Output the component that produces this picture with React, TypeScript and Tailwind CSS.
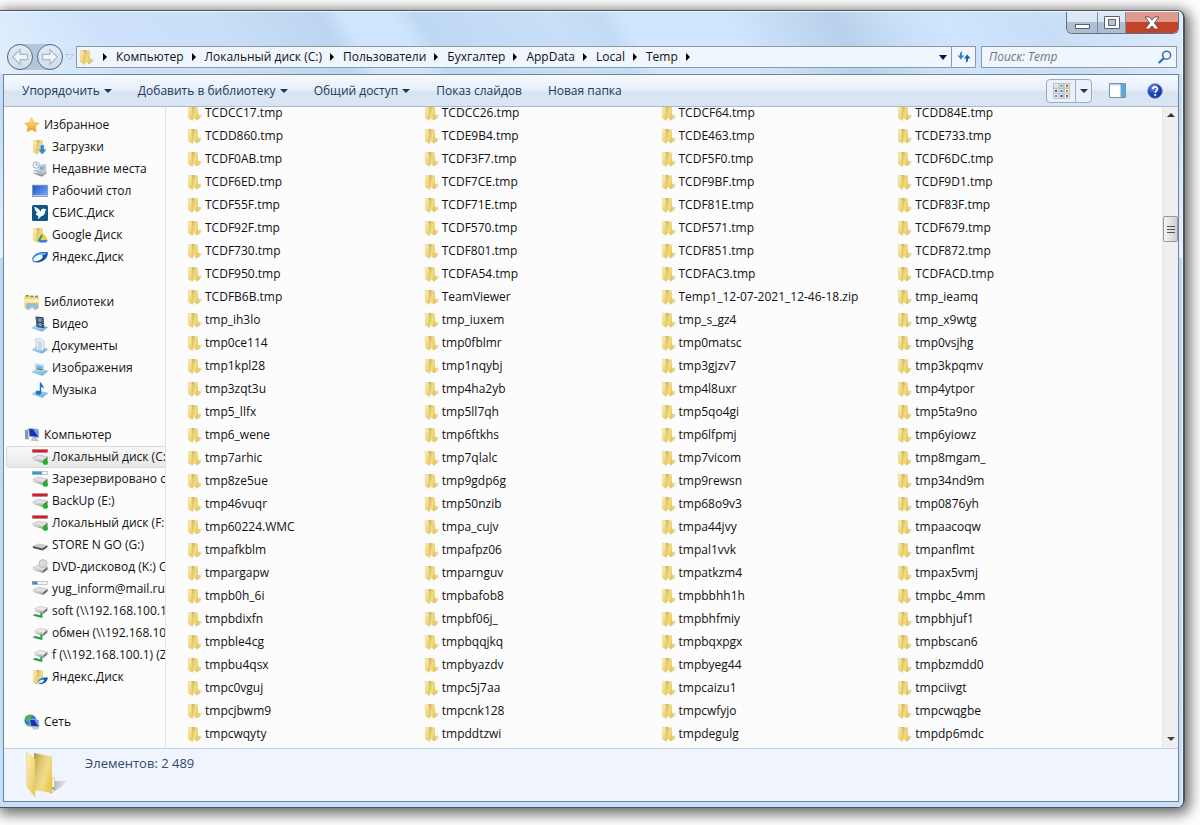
import React from "react";

interface NavItem {
  label: string;
  icon: React.ReactNode;
  active?: boolean;
}

interface NavGroup extends NavItem {
  items: NavItem[];
}

const files = `
TCDCC17.tmp TCDCC26.tmp TCDCF64.tmp TCDD84E.tmp
TCDD860.tmp TCDE9B4.tmp TCDE463.tmp TCDE733.tmp
TCDF0AB.tmp TCDF3F7.tmp TCDF5F0.tmp TCDF6DC.tmp
TCDF6ED.tmp TCDF7CE.tmp TCDF9BF.tmp TCDF9D1.tmp
TCDF55F.tmp TCDF71E.tmp TCDF81E.tmp TCDF83F.tmp
TCDF92F.tmp TCDF570.tmp TCDF571.tmp TCDF679.tmp
TCDF730.tmp TCDF801.tmp TCDF851.tmp TCDF872.tmp
TCDF950.tmp TCDFA54.tmp TCDFAC3.tmp TCDFACD.tmp
TCDFB6B.tmp TeamViewer Temp1_12-07-2021_12-46-18.zip tmp_ieamq
tmp_ih3lo tmp_iuxem tmp_s_gz4 tmp_x9wtg
tmp0ce114 tmp0fblmr tmp0matsc tmp0vsjhg
tmp1kpl28 tmp1nqybj tmp3gjzv7 tmp3kpqmv
tmp3zqt3u tmp4ha2yb tmp4l8uxr tmp4ytpor
tmp5_llfx tmp5ll7qh tmp5qo4gi tmp5ta9no
tmp6_wene tmp6ftkhs tmp6lfpmj tmp6yiowz
tmp7arhic tmp7qlalc tmp7vicom tmp8mgam_
tmp8ze5ue tmp9gdp6g tmp9rewsn tmp34nd9m
tmp46vuqr tmp50nzib tmp68o9v3 tmp0876yh
tmp60224.WMC tmpa_cujv tmpa44jvy tmpaacoqw
tmpafkblm tmpafpz06 tmpal1vvk tmpanflmt
tmpargapw tmparnguv tmpatkzm4 tmpax5vmj
tmpb0h_6i tmpbafob8 tmpbbhh1h tmpbc_4mm
tmpbdixfn tmpbf06j_ tmpbhfmiy tmpbhjuf1
tmpble4cg tmpbqqjkq tmpbqxpgx tmpbscan6
tmpbu4qsx tmpbyazdv tmpbyeg44 tmpbzmdd0
tmpc0vguj tmpc5j7aa tmpcaizu1 tmpciivgt
tmpcjbwm9 tmpcnk128 tmpcwfyjo tmpcwqgbe
tmpcwqyty tmpddtzwi tmpdegulg tmpdp6mdc
`
  .trim()
  .split(/\s+/);

const crumbs = [
  "Компьютер",
  "Локальный диск (C:)",
  "Пользователи",
  "Бухгалтер",
  "AppData",
  "Local",
  "Temp",
];

const SharedGradients = () => (
  <svg width="0" height="0" className="absolute" aria-hidden="true">
    <defs>
      <linearGradient id="flap" x1="0" y1="0" x2="1" y2="1">
        <stop offset="0" stopColor="#fff3b4" />
        <stop offset="1" stopColor="#e6c355" />
      </linearGradient>
      <linearGradient id="back" x1="0" y1="0" x2="1" y2="0.6">
        <stop offset="0" stopColor="#b8973a" />
        <stop offset="0.4" stopColor="#e2cb76" />
        <stop offset="0.7" stopColor="#f1dd88" />
        <stop offset="1" stopColor="#ecc94b" />
      </linearGradient>
      <linearGradient id="screen" x1="0" y1="0" x2="1" y2="1">
        <stop offset="0" stopColor="#1d4fc4" />
        <stop offset="1" stopColor="#7fb0f5" />
      </linearGradient>
      <linearGradient id="star" x1="0" y1="0" x2="0" y2="1">
        <stop offset="0" stopColor="#ffe98a" />
        <stop offset="1" stopColor="#f29a1f" />
      </linearGradient>
      <linearGradient id="metal" x1="0" y1="0" x2="0" y2="1">
        <stop offset="0" stopColor="#f4f4f4" />
        <stop offset="1" stopColor="#8b8b8b" />
      </linearGradient>
      <linearGradient id="tray" x1="0" y1="0" x2="1" y2="1">
        <stop offset="0" stopColor="#cdeafa" />
        <stop offset="1" stopColor="#5aa9dc" />
      </linearGradient>
      <linearGradient id="disk" x1="0" y1="0" x2="1" y2="0.4">
        <stop offset="0" stopColor="#2f9bea" />
        <stop offset="1" stopColor="#0b3f9c" />
      </linearGradient>
      <radialGradient id="help" cx="0.4" cy="0.3" r="0.8">
        <stop offset="0" stopColor="#6f92ee" />
        <stop offset="0.5" stopColor="#1f45c0" />
        <stop offset="1" stopColor="#0d2a86" />
      </radialGradient>
      <linearGradient id="shade" x1="0" y1="0" x2="1" y2="0">
        <stop offset="0" stopColor="#777" stopOpacity="0.6" />
        <stop offset="1" stopColor="#777" stopOpacity="0.1" />
      </linearGradient>
    </defs>
  </svg>
);

const Icon = ({ children }: { children: React.ReactNode }) => (
  <svg viewBox="0 0 16 16" className="h-4 w-4 shrink-0" aria-hidden="true">
    {children}
  </svg>
);

const FolderShape = () => (
  <>
    <path d="M9 10.5 15 9.5 14.5 12.5 9 15.5Z" fill="url(#shade)" />
    <path d="M4.5 1 11 1.6V14.3L4.5 13.6Z" fill="url(#back)" />
    <path d="M11 9.8 12.8 10V14L11 14.3Z" fill="#e9d173" />
    <path d="M1.4 1 5.6 2.8V15.6L1.4 13.2Z" fill="url(#flap)" stroke="#dcc57a" strokeWidth="0.4" />
  </>
);

const FolderIcon = () => (
  <Icon>
    <FolderShape />
  </Icon>
);

const StarIcon = () => (
  <Icon>
    <path
      d="M7.6.8 9.8 5.4l5 .8-3.6 3.4 1 5.4-4.4-2.5-4.6 2.3.8-5L.8 6.3l4.8-.8Z"
      fill="url(#star)"
      stroke="#e7a23a"
      strokeWidth="0.6"
    />
  </Icon>
);

const DownloadsIcon = () => (
  <Icon>
    <FolderShape />
    <path d="M8.4 6h3.6v4.4h2.2l-4 4.8-4-4.8h2.2Z" fill="#2b86d6" stroke="#bfe0f8" strokeWidth="0.4" />
  </Icon>
);

const RecentIcon = () => (
  <Icon>
    <path d="M5 9.5 12 8l3 4-5 3.4-6-2Z" fill="url(#metal)" stroke="#888" strokeWidth="0.4" />
    <path d="M6.5 4.5 13.5 3.5V9.5L7 11Z" fill="#dfe7ee" stroke="#8f9aa5" strokeWidth="0.6" />
    <path d="M8 5.6 12.4 5V8.6L8 9.5Z" fill="#7faed6" />
    <circle cx="4.2" cy="4" r="3.2" fill="#f3f6f9" stroke="#8fa0ae" strokeWidth="0.8" />
    <path d="M4.2 2v2.1h1.6" fill="none" stroke="#4a6e92" strokeWidth="0.6" />
    <path d="m1.5 10 3.5-.8M1.2 12l3 1" stroke="#9aa3ab" strokeWidth="1" />
  </Icon>
);

const DesktopIcon = () => (
  <Icon>
    <rect x="0.5" y="2.2" width="15" height="11.2" fill="url(#screen)" stroke="#7d93ba" strokeWidth="0.8" />
    <path d="M1 12h14v1H1z" fill="#b7cdf0" />
  </Icon>
);

const SbisIcon = () => (
  <Icon>
    <rect width="16" height="16" rx="1.5" fill="#0e5785" />
    <path
      d="M2.4 1.8C5 2.4 7.4 4.2 8.4 6.4 9.2 4.6 10.4 3.6 12 3.6L14.6 5 13.2 6C13.2 9.4 11.4 11 9.2 11.2L6 14.400 6.400 11C4.400 10.600 3.800 9.200 4 8L5.800 8C3.600 6.600 2.400 4.400 2.400 1.800Z"
      fill="#fff"
    />
  </Icon>
);

const GoogleDriveIcon = () => (
  <Icon>
    <FolderShape />
    <path d="M9.3 7h2.6l3.8 6h-2.6Z" fill="#f7c52d" />
    <path d="M9.3 7 5.8 13.2 7 15.4l3.6-6.2Z" fill="#1fa463" />
    <path d="M8.3 13h7.4l-1.3 2.4H7Z" fill="#4076e8" />
  </Icon>
);

const YandexIcon = () => (
  <Icon>
    <path d="M.2 9.400C1.800 5 7 2.200 15.800 3.200 16.200 9 10.400 13.600 4.400 13.600 1.200 13.400-.2 11.600.2 9.400Z" fill="url(#disk)" />
    <path d="M3.400 7.200C6.400 4 11 3.600 14.800 3.900 13 6.800 8 6.400 3.400 7.200Z" fill="#5bb6f5" />
    <ellipse cx="6" cy="9" rx="5" ry="2.500" transform="rotate(-24 6 9)" fill="#f4faff" />
  </Icon>
);

const LibraryIcon = () => (
  <Icon>
    <path d="M1 2h4l1 1.3h8.5V14H1Z" fill="#f1d77b" stroke="#d3b454" strokeWidth="0.6" />
    <path d="M2 1h2.6v1.4H2z" fill="#4ba24b" />
    <path d="M6.5 1.6h3V3h-3z" fill="#d4653f" />
    <path d="M11 1.6h3V3h-3z" fill="#4b8bd4" />
    <path d="M.6 5h14.8v3.4H.6z" fill="#fbeeb0" />
    <path d="M3 15.2V9.8h10v5.4h-2.6v-2.8H5.6v2.8Z" fill="#8ec7ee" stroke="#5f9fcb" strokeWidth="0.5" />
  </Icon>
);

const Tray = () => (
  <path d="M.4 12 5 8.6l10.6 2.6L10.4 15.4Z" fill="url(#tray)" stroke="#5d9fca" strokeWidth="0.5" />
);

const VideoIcon = () => (
  <Icon>
    <Tray />
    <path d="M3.4.6 11.6 1.2 12.4 12.2 4.6 11Z" fill="#34404e" />
    <path d="M5.8 2.2 9.6 2.5V6L6.1 5.7ZM6.2 7 9.9 7.3 10.1 10.5 6.5 10Z" fill="#6f9fcc" />
    <path d="M4.4 1.6 5.2 10.6M10.8 2 11.5 11.3" stroke="#c7d3de" strokeWidth="0.7" strokeDasharray="1 1" />
  </Icon>
);

const DocumentsIcon = () => (
  <Icon>
    <Tray />
    <path d="M3.6 1 9.4.8 12 3.2V12.6L4.6 11.4Z" fill="#f3f8fc" stroke="#8ea9bf" strokeWidth="0.6" />
    <path d="M5.4 4h4.6M5.6 6h4.8M5.7 8h4.8M5.9 10h4.2" stroke="#87a8c6" strokeWidth="0.7" />
  </Icon>
);

const PicturesIcon = () => (
  <Icon>
    <Tray />
    <path d="M3.2 4 11.6 5V12L3.8 10.6Z" fill="#fff" stroke="#86a9c4" strokeWidth="0.6" />
    <path d="M4.4 5.2 10.6 6V8.8L4.6 8Z" fill="#69b3e6" />
    <path d="M4.6 8 10.6 8.8V10.8L4.8 9.8Z" fill="#4d8d77" />
  </Icon>
);

const MusicIcon = () => (
  <Icon>
    <Tray />
    <ellipse cx="6.6" cy="10.8" rx="2.8" ry="2" fill="#1e73c4" />
    <path d="M7.8.6H9.2C9.4 3 12.4 3.6 11.6 7 11 5.4 10 5 9.2 5V11H7.8Z" fill="#1e73c4" />
  </Icon>
);

const Monitor = () => (
  <>
    <path d="M4.6 1.4 14 2.4 14.6 10.4 5.4 9.4Z" fill="#1233b8" stroke="#a8b2c2" strokeWidth="0.9" />
    <path d="M9.4 2.4 13.4 2.8 13.9 9.6Z" fill="#7fa7f2" />
    <path d="M8.6 10.6 12 11 14.4 14 7.4 13.4Z" fill="#c4cad2" stroke="#929aa5" strokeWidth="0.4" />
  </>
);

const ComputerIcon = () => (
  <Icon>
    <path d="M.8 3 4 2.4 4.6 12.6 1.2 12Z" fill="#8c949e" />
    <path d="M1.5 4.5h1.8" stroke="#5fd15f" strokeWidth="0.9" />
    <Monitor />
  </Icon>
);

const NetworkIcon = () => (
  <Icon>
    <circle cx="6.4" cy="6.4" r="6" fill="#2f7fcf" />
    <path d="M1 4.5C3 1 6 .6 8 1.2 8 4 5 4.6 4.4 7.6 2.6 8 1.2 6.6 1 4.5ZM2.6 10.6 5.6 9.8 6.4 12.2 4.6 12Z" fill="#4fb54a" />
    <path d="M5.6 5.2 14.2 6 15 13 6.6 12.2Z" fill="#1a2fb4" stroke="#b5bfce" strokeWidth="0.8" />
    <path d="M10.6 6.2 13.8 6.6 14.2 12.2Z" fill="#7fa7f2" />
    <path d="M8 13h6l1.4 2.4H8.6Z" fill="#c4cad2" />
  </Icon>
);

const DriveShape = () => (
  <>
    <path d="M.6 9 6.4 6.2 15.6 8 11 11.4Z" fill="#e2e2e2" stroke="#8d8d8d" strokeWidth="0.4" />
    <path d="M.6 9 11 11.4V14L1 11Z" fill="url(#metal)" />
    <path d="M11 11.4 15.6 8V10.4L11 14Z" fill="#6c6c6c" />
  </>
);

const UsageDriveIcon = ({ fill, width, ok = false }: { fill: string; width: number; ok?: boolean }) => (
  <Icon>
    <DriveShape />
    <rect x="0.4" y="0.6" width="15.2" height="2.8" fill="#f2f2f2" stroke="#9a9a9a" strokeWidth="0.5" />
    <rect x="0.4" y="0.6" width={width} height="2.8" fill={fill} />
    {ok && <circle cx="13.4" cy="13.2" r="2.6" fill="#1fb32b" />}
  </Icon>
);

const UsbDriveIcon = () => (
  <Icon>
    <path d="M.8 9 6.6 6.4 15.4 8.2 10.6 11.4Z" fill="#c9c9c9" />
    <path d="M.8 9 10.6 11.4V13.6L1 11Z" fill="#4d4d4d" />
    <path d="M10.6 11.4 15.4 8.2V10L10.6 13.6Z" fill="#2c2c2c" />
  </Icon>
);

const DvdIcon = () => (
  <Icon>
    <DriveShape />
    <circle cx="11" cy="4.6" r="4" fill="#d9dfd8" stroke="#9a9f9c" strokeWidth="0.6" />
    <circle cx="11" cy="4.6" r="1.1" fill="#fff" stroke="#999" strokeWidth="0.4" />
  </Icon>
);

const NetDriveIcon = () => (
  <Icon>
    <path d="M2.6 6 7.4 3.4 15.4 5 11.4 8.2Z" fill="#ececec" stroke="#8d8d8d" strokeWidth="0.4" />
    <path d="M2.6 6 11.4 8.2V11L2.8 8.2Z" fill="url(#metal)" />
    <path d="M11.4 8.2 15.4 5V7.6L11.4 11Z" fill="#777" />
    <path d="M1 12 9 14" stroke="#9a9a9a" strokeWidth="1.4" />
    <path d="M2.6 11.8 9.4 13.6V9.8" fill="none" stroke="#19a548" strokeWidth="2" />
  </Icon>
);

const YandexFolderIcon = () => (
  <Icon>
    <FolderShape />
    <path d="M6 13C6.400 9.400 10.600 7.800 15.800 8.600 15.600 13 10.600 15.800 7.200 14.800Z" fill="url(#disk)" />
    <ellipse cx="9.400" cy="12.200" rx="3" ry="1.300" transform="rotate(-24 9.400 12.200)" fill="#dff0fd" />
  </Icon>
);

const redDrive = <UsageDriveIcon fill="#cf1f2b" width={15.2} ok />;

const navGroups: NavGroup[] = [
  {
    label: "Избранное",
    icon: <StarIcon />,
    items: [
      { label: "Загрузки", icon: <DownloadsIcon /> },
      { label: "Недавние места", icon: <RecentIcon /> },
      { label: "Рабочий стол", icon: <DesktopIcon /> },
      { label: "СБИС.Диск", icon: <SbisIcon /> },
      { label: "Google Диск", icon: <GoogleDriveIcon /> },
      { label: "Яндекс.Диск", icon: <YandexIcon /> },
    ],
  },
  {
    label: "Библиотеки",
    icon: <LibraryIcon />,
    items: [
      { label: "Видео", icon: <VideoIcon /> },
      { label: "Документы", icon: <DocumentsIcon /> },
      { label: "Изображения", icon: <PicturesIcon /> },
      { label: "Музыка", icon: <MusicIcon /> },
    ],
  },
  {
    label: "Компьютер",
    icon: <ComputerIcon />,
    items: [
      { label: "Локальный диск (C:)", icon: redDrive, active: true },
      { label: "Зарезервировано с", icon: <UsageDriveIcon fill="#2f9fce" width={9.5} ok /> },
      { label: "BackUp (E:)", icon: redDrive },
      { label: "Локальный диск (F:)", icon: redDrive },
      { label: "STORE N GO (G:)", icon: <UsbDriveIcon /> },
      { label: "DVD-дисковод (K:) C", icon: <DvdIcon /> },
      { label: "yug_inform@mail.ru", icon: <UsageDriveIcon fill="#2f8fc0" width={5} /> },
      { label: "soft (\\\\192.168.100.1)", icon: <NetDriveIcon /> },
      { label: "обмен (\\\\192.168.10", icon: <NetDriveIcon /> },
      { label: "f (\\\\192.168.100.1) (Z", icon: <NetDriveIcon /> },
      { label: "Яндекс.Диск", icon: <YandexFolderIcon /> },
    ],
  },
  { label: "Сеть", icon: <NetworkIcon />, items: [] },
];

const Caret = () => (
  <svg viewBox="0 0 8 4" className="h-1 w-2 shrink-0" aria-hidden="true">
    <path d="M0 0h8L4 4Z" fill="#1e3358" />
  </svg>
);

const Chevron = () => (
  <svg viewBox="0 0 4 8" className="mr-[9px] ml-2 h-2 w-1 shrink-0" aria-hidden="true">
    <path d="M0 0 4 4 0 8Z" fill="#000" />
  </svg>
);

const WindowButtons = () => (
  <div className="flex h-[22px] overflow-hidden rounded-b-md border border-t-0 border-[#5f7185]">
    <button
      type="button"
      aria-label="Свернуть"
      className="flex w-[31px] items-end justify-center border-r border-[#7f90a6] bg-linear-to-b from-[#dbe8f6] from-45% to-[#aebfd3] to-50% pb-1"
    >
      <span className="h-[5px] w-[15px] border border-[#5a6270] bg-white" />
    </button>
    <button
      type="button"
      aria-label="Развернуть"
      className="flex w-7 items-center justify-center border-r border-[#7f90a6] bg-linear-to-b from-[#dbe8f6] from-45% to-[#aebfd3] to-50%"
    >
      <svg viewBox="0 0 16 13" className="h-[13px] w-4" aria-hidden="true">
        <path d="M.5.5h15v12H.5Z" fill="#fff" stroke="#5a6270" />
        <path d="M4.5 3.5h7v6h-7Z" fill="#b5c6da" stroke="#5a6270" />
      </svg>
    </button>
    <button
      type="button"
      aria-label="Закрыть"
      className="flex w-[52px] items-center justify-center bg-linear-to-b from-[#df9c8e] from-45% to-[#c4412a] to-50%"
    >
      <svg viewBox="0 0 16 14" className="h-[14px] w-4" aria-hidden="true">
        <path
          d="M1 1h4.4L8 4l2.6-3H15l-4.6 6 4.6 6h-4.4L8 10l-2.6 3H1l4.6-6Z"
          fill="#fff"
          stroke="#5b4a52"
          strokeWidth="0.9"
        />
      </svg>
    </button>
  </div>
);

const NavButtons = () => (
  <div className="flex h-[26px] items-center rounded-full bg-[#b4c6dc]">
    {["M11 4 5 10l6 6v-3.800h6V7.800h-6Z", "M11 4l6 6-6 6v-3.800H5V7.800h6Z"].map((d, i) => (
      <button
        key={d}
        type="button"
        aria-label={i === 0 ? "Назад" : "Вперед"}
        className="mr-1 flex h-[26px] w-[26px] items-center justify-center rounded-full border border-[#5c6b7d] bg-linear-to-b from-[#e3ebf4] to-[#cfddec] last:mr-0"
      >
        <svg viewBox="2 1 18 18" className="h-[22px] w-[22px] shrink-0" aria-hidden="true">
          <path d={d} fill="#f1f5f9" stroke="#aab8c8" strokeWidth="1" />
        </svg>
      </button>
    ))}
  </div>
);

const AddressBar = () => (
  <div className="flex items-center pr-[5px] pl-[7px]">
    <NavButtons />
    <svg viewBox="0 0 9 6" className="mx-0.5 h-1.5 w-[9px] shrink-0" aria-hidden="true">
      <path d="M.7.7h7.6L4.5 5.3Z" fill="#e8f1fb" stroke="#a9bad0" strokeWidth="0.8" />
    </svg>
    <nav
      aria-label="Адрес"
      className="flex h-[22px] min-w-0 flex-1 items-center border border-[#8d98a6] bg-[#eff6fe] pl-0.5"
    >
      <FolderIcon />
      <div className="flex min-w-0 flex-1 items-center">
        <Chevron />
        {crumbs.map((crumb) => (
          <React.Fragment key={crumb}>
            <a href="#" className="whitespace-nowrap">
              {crumb}
            </a>
            <Chevron />
          </React.Fragment>
        ))}
      </div>
      <button type="button" aria-label="Предыдущие расположения" className="flex h-full w-4 items-center justify-center">
        <svg viewBox="0 0 8 5" className="h-[5px] w-2" aria-hidden="true">
          <path d="M0 0h8L4 5Z" fill="#10104c" />
        </svg>
      </button>
      <button
        type="button"
        aria-label="Обновить"
        className="flex h-full w-6 items-center justify-center border-l border-[#8d98a6]"
      >
        <svg viewBox="0 0 14 12" className="h-3 w-3.5" aria-hidden="true">
          <path d="M5.4.6C3 .8 2.8 3 3 4.6H.6L4 8.6l3.2-4H5C4.8 3 4.8 1.6 5.4.6Z" fill="#2f86c9" />
          <path d="M8.6 11.4c2.4-.2 2.6-2.4 2.4-4h2.6L10.2 3.4 7 7.4h2C9.2 9 9.2 10.4 8.6 11.4Z" fill="#1d5fae" />
        </svg>
      </button>
    </nav>
    <div className="ml-[5px] flex h-[22px] w-[196px] items-center border border-[#8d98a6] bg-[#eff6fe] pr-1">
      <input
        type="text"
        aria-label="Поиск"
        placeholder="Поиск: Temp"
        className="w-full min-w-0 flex-1 bg-transparent pl-[7px] italic outline-none placeholder:text-[#6f7680]"
      />
      <svg viewBox="0 0 14 14" className="h-3.5 w-3.5 shrink-0" aria-hidden="true">
        <circle cx="8.6" cy="5.2" r="4" fill="#f3f9ff" stroke="#3a72b4" strokeWidth="1.6" />
        <path d="M5.6 8.4 1.4 12.4" stroke="#3a72b4" strokeWidth="2.2" strokeLinecap="round" />
      </svg>
    </div>
  </div>
);

const dotColors = ["#c8d8e8", "#52a052", "#d0472c", "#a53c3c", "#3c7fc4", "#9aab30", "#4f9fc0", "#2f4f8f", "#d0472c"];

const Toolbar = () => (
  <div className="flex h-8 items-center border-b border-[#a9b9d1] bg-linear-to-b from-[#f6faff] from-0% via-[#e6effa] via-48% to-[#dae5f4] to-52% pr-[15px] pl-[18px] text-[#1e395b]">
    <div className="flex flex-1 items-center gap-[26px] whitespace-nowrap">
      <button type="button" className="flex items-center gap-1">
        Упорядочить <Caret />
      </button>
      <button type="button" className="flex items-center gap-1">
        Добавить в библиотеку <Caret />
      </button>
      <button type="button" className="flex items-center gap-1">
        Общий доступ <Caret />
      </button>
      <button type="button">Показ слайдов</button>
      <button type="button">Новая папка</button>
    </div>
    <div className="flex h-6 rounded-sm border border-[#9cacbf] bg-[#eaf1fa]">
      <button type="button" aria-label="Изменить представление" className="flex w-7 items-center justify-center">
        <svg viewBox="0 0 17 16" className="h-4 w-[17px]" aria-hidden="true">
          {dotColors.map((color, i) => (
            <g key={i}>
              <rect
                x={(i % 3) * 5.6 + 0.5}
                y={Math.floor(i / 3) * 5.2 + 0.5}
                width="4.6"
                height="4.4"
                fill="#fff"
                stroke="#a3aebb"
                strokeWidth="0.7"
              />
              <rect x={(i % 3) * 5.6 + 1.8} y={Math.floor(i / 3) * 5.2 + 1.6} width="2.2" height="2.2" fill={color} />
            </g>
          ))}
        </svg>
      </button>
      <button
        type="button"
        aria-label="Дополнительно"
        className="flex w-4 items-center justify-center border-l border-[#9cacbf]"
      >
        <Caret />
      </button>
    </div>
    <button type="button" aria-label="Область просмотра" className="ml-[17px]">
      <svg viewBox="0 0 17 15" className="h-[15px] w-[17px]" aria-hidden="true">
        <path d="M.5.5h16v14H.5Z" fill="#fff" stroke="#7d90a8" />
        <path d="M1 1h15v1.6H1Z" fill="#c3d3e6" />
        <path d="M11.5 1H16V14H11.5Z" fill="#5fa9d0" />
      </svg>
    </button>
    <button type="button" aria-label="Справка" className="ml-[21px]">
      <svg viewBox="0 0 16 16" className="h-4 w-4" aria-hidden="true">
        <circle cx="8" cy="8" r="7.4" fill="url(#help)" stroke="#8fa3d4" strokeWidth="0.9" />
        <path
          d="M5.8 6.2C5.8 3.2 10.4 3.2 10.4 6 10.4 7.8 8.2 7.8 8.2 9.8"
          fill="none"
          stroke="#fff"
          strokeWidth="1.7"
        />
        <circle cx="8.2" cy="12.1" r="1.1" fill="#fff" />
      </svg>
    </button>
  </div>
);

const Sidebar = () => (
  <nav
    aria-label="Область переходов"
    className="flex w-[162px] shrink-0 flex-col gap-[23px] overflow-hidden border-r border-[#d9e4f5] pt-[7px]"
  >
    {navGroups.map((group) => (
      <div key={group.label}>
        <a href="#" className="flex h-[22px] items-center gap-1 pl-5 whitespace-nowrap">
          {group.icon}
          {group.label}
        </a>
        {group.items.map((item) => (
          <a
            key={item.label}
            href="#"
            className={
              item.active
                ? "ml-0.5 flex h-[22px] items-center gap-1 rounded-l-sm border border-r-0 border-[#dadada] bg-linear-to-b from-[#f8f8f8] to-[#e8e8e8] pl-[25px] whitespace-nowrap"
                : "flex h-[22px] items-center gap-1 pl-7 whitespace-nowrap"
            }
          >
            {item.icon}
            {item.label}
          </a>
        ))}
      </div>
    ))}
  </nav>
);

const ScrollBar = () => (
  <div className="flex w-4 shrink-0 flex-col items-center border-l border-[#e6e6e6] bg-[#efefef]">
    <button type="button" aria-label="Вверх" className="flex h-4 w-full items-center justify-center">
      <svg viewBox="0 0 8 4" className="h-1 w-2" aria-hidden="true">
        <path d="M0 4 4 0l4 4Z" fill="#333" />
      </svg>
    </button>
    <div className="h-[93px]" />
    <div className="flex h-[26px] w-full flex-col items-center justify-center gap-0.5 rounded-xs border border-[#989898] bg-linear-to-r from-[#f6f6f6] to-[#cfcfcf]">
      <span className="h-px w-2 bg-[#555]" />
      <span className="h-px w-2 bg-[#555]" />
      <span className="h-px w-2 bg-[#555]" />
    </div>
    <div className="flex-1" />
    <button type="button" aria-label="Вниз" className="flex h-[18px] w-full items-center justify-center">
      <svg viewBox="0 0 8 4" className="h-1 w-2" aria-hidden="true">
        <path d="M0 0 4 4l4-4Z" fill="#444" />
      </svg>
    </button>
  </div>
);

const FileList = () => (
  <main className="min-w-0 flex-1 overflow-hidden">
    <ul className="-mt-1.5 grid grid-cols-4 pr-[28px] pb-[3px] pl-[21px]">
      {files.map((file) => (
        <li key={file} className="h-[23px]">
          <a href="#" className="flex h-full items-center gap-0.5 whitespace-nowrap">
            <FolderIcon />
            {file}
          </a>
        </li>
      ))}
    </ul>
  </main>
);

const DetailsPane = () => (
  <footer className="flex h-[53px] border-t border-[#bfd2ea] bg-[#f0f4fc] pl-5">
    <svg viewBox="0 0 44 50" className="mt-0.5 h-[50px] w-11" aria-hidden="true">
      <path d="M24 30 43 30 37 36 26 43Z" fill="url(#shade)" />
      <path d="M10 2 28 5.500V42L10 39Z" fill="url(#back)" />
      <path d="M28 27h2.500v12.500l-2.500 2.500Z" fill="#fff" stroke="#d5bc62" strokeWidth="0.8" />
      <path d="M28.500 36h2v3h-2Z" fill="#6fa9dc" />
      <path d="M2.500 1.500 11 8V46L3 36Z" fill="url(#flap)" stroke="#e2cd7c" strokeWidth="0.6" />
    </svg>
    <p className="mt-1.5 ml-[17px] text-[13px] leading-4 text-[#33496d]">Элементов: 2 489</p>
  </footer>
);

const App: React.FC = () => (
  <div className="min-h-screen overflow-hidden bg-white pt-[10px] pr-[15px] pb-[15px] font-['Open_Sans','Noto_Sans',sans-serif] text-[12px] leading-4 text-[#111]">
    <SharedGradients />
    <div className="rounded-r-lg border-y border-r-2 border-[#4b545e] shadow-[2px_3px_14px_3px_rgba(0,0,0,0.6)]">
      <div className="overflow-hidden rounded-r-md border-t border-r border-[#eef6ff] bg-[linear-gradient(#cfe5fd_0%,#c0dcf8_12%,#e6f3ff_31%,#b9d8f6_31%,#c6dff9_100%)]">
        <div className="bg-[linear-gradient(60deg,#e2f0fe_0%,#cde2fa_10%,#c9dff7_20%,#bdd5ef_29%,#cfe5fe_31%,#cfe5fe_35%,#bfd8f2_37%,#c8dff7_48%,#c3dbf4_52%,#d0e6fe_54%,#d0e6fe_62%,#b9d0ea_71%,#c8dff7_76%,#cfe5fe_80%,#c8def6_88%,#dcecfd_100%)] pb-1">
          <header className="flex h-8 justify-end pr-[3px]">
            <WindowButtons />
          </header>
          <AddressBar />
        </div>
        <div className="mr-[3px] mb-[5px] ml-[3px] border border-[#71839b] bg-[#fcfcfc]">
          <Toolbar />
          <div className="flex">
            <Sidebar />
            <FileList />
            <ScrollBar />
          </div>
          <DetailsPane />
        </div>
      </div>
    </div>
  </div>
);

export default App;
